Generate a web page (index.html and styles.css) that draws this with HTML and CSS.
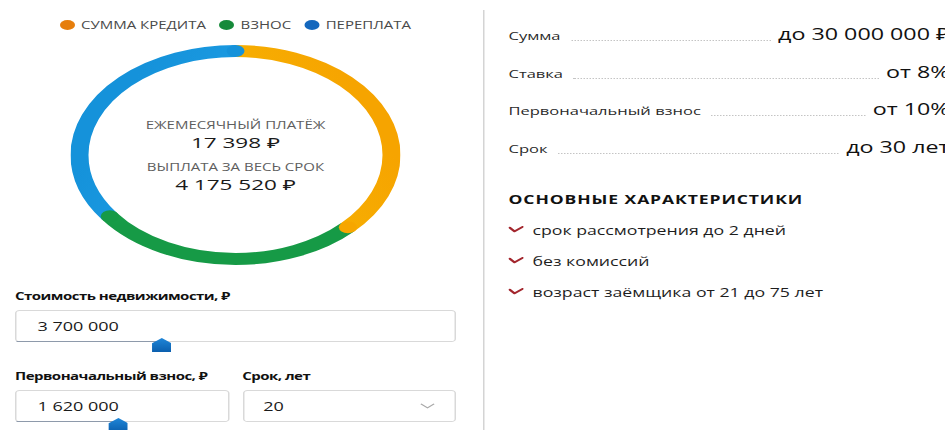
FILE: index.html
```html
<!DOCTYPE html>
<html lang="ru">
<head>
<meta charset="utf-8">
<title>Ипотечный калькулятор</title>
<link rel="stylesheet" href="styles.css">
</head>
<body>
<div class="stage">
  <section class="calc">
    <ul class="legend">
      <li><span class="dot dot-credit"></span>СУММА КРЕДИТА</li>
      <li><span class="dot dot-fee"></span>ВЗНОС</li>
      <li><span class="dot dot-over"></span>ПЕРЕПЛАТА</li>
    </ul>

    <div class="donut">
      <svg class="donut-ring" width="220" height="220" viewBox="0 0 220 220">
        <defs>
          <linearGradient id="gCredit" gradientUnits="userSpaceOnUse" x1="110" y1="6" x2="180" y2="190">
            <stop offset="0" stop-color="#f8c206"/>
            <stop offset="1" stop-color="#f6a400"/>
          </linearGradient>
          <linearGradient id="gFee" gradientUnits="userSpaceOnUse" x1="40" y1="180" x2="185" y2="180">
            <stop offset="0" stop-color="#169a46"/>
            <stop offset="1" stop-color="#2ccb68"/>
          </linearGradient>
          <linearGradient id="gOver" gradientUnits="userSpaceOnUse" x1="100" y1="6" x2="30" y2="170">
            <stop offset="0" stop-color="#1592da"/>
            <stop offset="1" stop-color="#26aaf0"/>
          </linearGradient>
        </defs>
        <g transform="rotate(-90 110 110)" fill="none" stroke-width="12">
          <!-- arcs: credit 0-134deg, fee 134-234deg, overpay 234-360deg; r=104, C=653.45 -->
          <circle cx="110" cy="110" r="104" stroke="url(#gCredit)" stroke-dasharray="243.2 653.45" stroke-dashoffset="0"/>
          <circle cx="110" cy="110" r="104" stroke="url(#gFee)" stroke-dasharray="181.5 653.45" stroke-dashoffset="-243.2"/>
          <circle cx="110" cy="110" r="104" stroke="url(#gOver)" stroke-dasharray="228.75 653.45" stroke-dashoffset="-424.7"/>
        </g>
        <!-- rounded segment ends -->
        <circle cx="110" cy="6" r="6" fill="#1592da"/>
        <circle cx="184.9" cy="182.2" r="6" fill="#f6a600"/>
        <circle cx="26.2" cy="171.2" r="6" fill="#169a46"/>
      </svg>
      <div class="donut-info">
        <div class="info-label">ЕЖЕМЕСЯЧНЫЙ ПЛАТЁЖ</div>
        <div class="info-value">17 398 ₽</div>
        <div class="info-label info-label-2">ВЫПЛАТА ЗА ВЕСЬ СРОК</div>
        <div class="info-value">4 175 520 ₽</div>
      </div>
    </div>

    <div class="field field-wide">
      <label class="field-label">Стоимость недвижимости, ₽</label>
      <div class="input">
        <span class="input-text">3 700 000</span>
        <span class="track" style="width: 33%"></span>
        <span class="thumb" style="left: 33%"></span>
      </div>
    </div>

    <div class="field-row">
      <div class="field">
        <label class="field-label">Первоначальный взнос, ₽</label>
        <div class="input">
          <span class="input-text">1 620 000</span>
          <span class="track" style="width: 48%"></span>
          <span class="thumb" style="left: 48%"></span>
        </div>
      </div>
      <div class="field">
        <label class="field-label">Срок, лет</label>
        <div class="input select">
          <span class="input-text">20</span>
          <svg class="chevron" width="10" height="6" viewBox="0 0 10 6"><path d="M0.6 0.8 L5 4.8 L9.4 0.8" fill="none" stroke="#a8a8a8" stroke-width="1"/></svg>
        </div>
      </div>
    </div>
  </section>

  <section class="terms">
    <dl class="terms-list">
      <div class="term"><dt>Сумма</dt><dd class="leader"></dd><dd class="term-value">до 30 000 000 ₽</dd></div>
      <div class="term"><dt>Ставка</dt><dd class="leader"></dd><dd class="term-value">от 8%</dd></div>
      <div class="term"><dt>Первоначальный взнос</dt><dd class="leader"></dd><dd class="term-value">от 10%</dd></div>
      <div class="term"><dt>Срок</dt><dd class="leader"></dd><dd class="term-value">до 30 лет</dd></div>
    </dl>

    <h3 class="features-title">ОСНОВНЫЕ ХАРАКТЕРИСТИКИ</h3>
    <ul class="features">
      <li><svg class="check" width="10" height="7" viewBox="0 0 10 7"><path d="M0.8 1.6 L4 5.4 L9.4 0.9" fill="none" stroke="#a3262d" stroke-width="1.8" stroke-linecap="round" stroke-linejoin="round"/></svg>срок рассмотрения до 2 дней</li>
      <li><svg class="check" width="10" height="7" viewBox="0 0 10 7"><path d="M0.8 1.6 L4 5.4 L9.4 0.9" fill="none" stroke="#a3262d" stroke-width="1.8" stroke-linecap="round" stroke-linejoin="round"/></svg>без комиссий</li>
      <li><svg class="check" width="10" height="7" viewBox="0 0 10 7"><path d="M0.8 1.6 L4 5.4 L9.4 0.9" fill="none" stroke="#a3262d" stroke-width="1.8" stroke-linecap="round" stroke-linejoin="round"/></svg>возраст заёмщика от 21 до 75 лет</li>
    </ul>
  </section>
</div>
</body>
</html>
```

FILE: styles.css
```css
html, body {
  margin: 0;
  padding: 0;
  overflow: hidden;
  background: #fff;
}

body {
  font-family: "Open Sans", "Noto Sans", sans-serif;
  color: #222;
}

.stage {
  width: 640px;
  min-height: 440px;
  display: flex;
  transform: scaleX(1.5);
  transform-origin: 0 0;
}

/* ---------- calculator column ---------- */
.calc {
  width: 294px;
  padding: 18px 18px 0 10px;
  display: flex;
  flex-direction: column;
}

.legend {
  list-style: none;
  margin: 0;
  padding: 0;
  display: flex;
  justify-content: center;
  gap: 9px;
  font-size: 10px;
  line-height: 14px;
  color: #4a4a4a;
}

.legend li {
  display: flex;
  align-items: center;
  gap: 4px;
}

.dot {
  width: 10px;
  height: 10px;
  border-radius: 50%;
}
.dot-credit { background: #e67e0c; }
.dot-fee { background: #168a3a; }
.dot-over { background: #1467bd; }

.donut {
  margin-top: 13px;
  display: grid;
  justify-items: center;
  align-items: center;
}

.donut-ring,
.donut-info {
  grid-area: 1 / 1;
}

.donut-info {
  text-align: center;
  padding-top: 1px;
}

.info-label {
  font-size: 10px;
  line-height: 14px;
  color: #5e5e5e;
}

.info-label-2 {
  margin-top: 8px;
}

.info-value {
  font-size: 15px;
  line-height: 20px;
  color: #1a1a1a;
}

.field {
  display: flex;
  flex-direction: column;
}

.field-wide {
  margin-top: 24px;
}

.field-row {
  display: flex;
  gap: 9px;
  margin-top: 27px;
}

.field-row .field {
  flex: 1;
}

.field-label {
  font-size: 10px;
  line-height: 14px;
  font-weight: 700;
  letter-spacing: -0.35px;
  color: #111;
  margin-bottom: 7px;
}

.input {
  position: relative;
  height: 30px;
  border: 1px solid #d9d9d9;
  border-radius: 3px;
  display: flex;
  align-items: center;
  padding: 0 14px;
}

.select {
  justify-content: space-between;
  padding: 0 13px 0 13px;
}

.input-text {
  font-size: 12px;
  color: #1a1a1a;
}

.track {
  position: absolute;
  left: 0;
  bottom: -1px;
  height: 1px;
  background: #8e9aab;
}

.thumb {
  position: absolute;
  bottom: -11px;
  width: 13px;
  height: 14px;
  margin-left: -6px;
  background: linear-gradient(#1f86d8, #0b5fae);
  clip-path: polygon(50% 0, 100% 38%, 100% 100%, 0 100%, 0 38%);
}

/* ---------- terms column ---------- */
.terms {
  flex: 1;
  margin-top: 10px;
  border-left: 1px solid #d4d4d4;
  padding: 14px 7px 0 16px;
}

.terms-list {
  margin: 0;
  display: flex;
  flex-direction: column;
  gap: 17.5px;
}

.term {
  display: flex;
  align-items: baseline;
  height: 20px;
  line-height: 20px;
}

.term dt {
  font-size: 11px;
  color: #2a2a2a;
}

.term dd {
  margin: 0;
}

.leader {
  flex: 1;
  align-self: flex-end;
  margin: 0 5px 3px 7px !important;
  border-bottom: 1px dotted #c4c4c4;
}

.term-value {
  font-size: 15.5px;
  color: #111;
}

.features-title {
  margin: 34px 0 0;
  font-size: 11.7px;
  line-height: 16px;
  font-weight: 700;
  letter-spacing: 0.6px;
  color: #111;
}

.features {
  list-style: none;
  margin: 15px 0 0;
  padding: 0;
  display: flex;
  flex-direction: column;
  gap: 15px;
}

.features li {
  display: flex;
  align-items: center;
  gap: 6px;
  font-size: 11.8px;
  line-height: 16px;
  color: #1e1e1e;
}

.check {
  flex: none;
}
```
